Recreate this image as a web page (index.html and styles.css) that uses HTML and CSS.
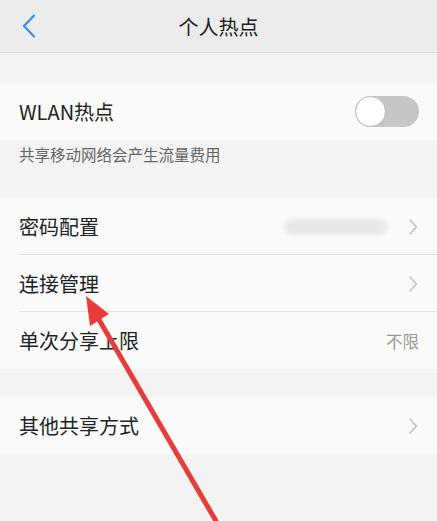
FILE: index.html
```html
<!DOCTYPE html>
<html lang="zh-CN">
<head>
    <meta charset="UTF-8">
    <title>个人热点</title>
    <link rel="stylesheet" href="styles.css">
</head>
<body>
<div class="header">
    <svg class="back" width="14" height="24" viewBox="0 0 14 24">
        <path d="M12 1.5 L2 12 L12 22.5" fill="none" stroke="#3b8fe0" stroke-width="2.2" stroke-linecap="round" stroke-linejoin="round"/>
    </svg>
    <span class="title">个人热点</span>
</div>

<div class="group first">
    <div class="row">
        <span class="label">WLAN热点</span>
        <div class="switch"><div class="knob"></div></div>
    </div>
</div>
<p class="hint">共享移动网络会产生流量费用</p>

<div class="group">
    <div class="row line">
        <span class="label">密码配置</span>
        <span class="blur"></span>
        <svg class="chev" width="10" height="18" viewBox="0 0 10 18"><path d="M1.5 1.5 L8.5 9 L1.5 16.5" fill="none" stroke="#c2c2c2" stroke-width="1.6"/></svg>
    </div>
    <div class="row line">
        <span class="label">连接管理</span>
        <svg class="chev" width="10" height="18" viewBox="0 0 10 18"><path d="M1.5 1.5 L8.5 9 L1.5 16.5" fill="none" stroke="#c2c2c2" stroke-width="1.6"/></svg>
    </div>
    <div class="row">
        <span class="label">单次分享上限</span>
        <span class="value">不限</span>
    </div>
</div>

<div class="group second">
    <div class="row">
        <span class="label">其他共享方式</span>
        <svg class="chev" width="10" height="18" viewBox="0 0 10 18"><path d="M1.5 1.5 L8.5 9 L1.5 16.5" fill="none" stroke="#c2c2c2" stroke-width="1.6"/></svg>
    </div>
</div>

<svg class="arrow" width="437" height="521" viewBox="0 0 437 521">
    <path d="M98 318 L216 521" stroke="#e63c3c" stroke-width="5" stroke-linecap="round"/>
    <polygon points="86,296 109,314 90,326" fill="#e63c3c"/>
</svg>
</body>
</html>
```

FILE: styles.css
```css
body {
    margin: 0;
    background-color: #f3f3f3;
    font-family: "Noto Sans CJK SC", "Noto Sans", sans-serif;
    color: #222;
    height: 521px;
    overflow: hidden;
    position: relative;
}
.header {
    height: 52px;
    background-color: #ececec;
    border-bottom: 1px solid #d6d6d6;
    display: flex;
    align-items: center;
    justify-content: center;
    position: relative;
}
.back {
    position: absolute;
    left: 22px;
    top: 14px;
}
.title {
    font-size: 20px;
}
.group {
    background-color: #fafafa;
}
.first {
    margin-top: 30px;
}
.second {
    margin-top: 28px;
}
.row {
    height: 57px;
    display: flex;
    align-items: center;
    padding: 0 18px 0 19px;
    position: relative;
}
.line::after {
    content: "";
    position: absolute;
    left: 19px;
    right: 0;
    bottom: 0;
    border-bottom: 1px solid #e2e2e2;
}
.label {
    font-size: 20px;
    flex: 1;
}
.hint {
    margin: 0;
    height: 58px;
    padding: 3px 19px 0;
    box-sizing: border-box;
    font-size: 15.5px;
    color: #666;
}
.switch {
    width: 64px;
    height: 31px;
    border-radius: 16px;
    background-color: #c6c6c6;
    position: relative;
}
.knob {
    position: absolute;
    left: 0;
    top: 0;
    width: 29px;
    height: 29px;
    border-radius: 50%;
    background-color: #fff;
    border: 1px solid #bdbdbd;
}
.chev {
    display: block;
    margin-right: 1px;
}
.blur {
    width: 104px;
    height: 16px;
    background-color: #e8e8e8;
    border-radius: 8px;
    filter: blur(2px);
    margin-right: 20px;
}
.value {
    font-size: 16.5px;
    color: #999;
}
.arrow {
    position: absolute;
    left: 0;
    top: 0;
}
```
